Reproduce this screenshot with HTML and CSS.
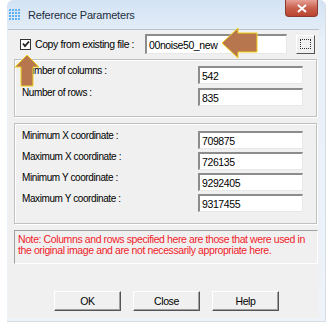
FILE: index.html
```html
<!DOCTYPE html>
<html lang="en">
<head>
  <meta charset="UTF-8">
  <title>Reference Parameters</title>
  <link rel="stylesheet" href="styles.css">
</head>
<body>

  <div class="window">
    <div class="titlebar">
      <svg class="app-icon" width="12" height="12" viewBox="0 0 12 12">
        <g fill="#5fb0f0">
          <rect x="0" y="0" width="2" height="2"/><rect x="3" y="0" width="2" height="2"/><rect x="6" y="0" width="2" height="2"/><rect x="9" y="0" width="2" height="2"/>
          <rect x="0" y="3" width="2" height="2"/><rect x="3" y="3" width="2" height="2"/><rect x="6" y="3" width="2" height="2"/><rect x="9" y="3" width="2" height="2"/>
          <rect x="0" y="6" width="2" height="2"/><rect x="3" y="6" width="2" height="2"/><rect x="6" y="6" width="2" height="2"/><rect x="9" y="6" width="2" height="2"/>
          <rect x="0" y="9" width="2" height="2"/><rect x="3" y="9" width="2" height="2"/><rect x="6" y="9" width="2" height="2"/><rect x="9" y="9" width="2" height="2"/>
        </g>
      </svg>
      <span class="title">Reference Parameters</span>
      <div class="close-btn">
        <svg width="10" height="9" viewBox="0 0 10 9">
          <path d="M1 1 L9 8 M9 1 L1 8" stroke="#fff" stroke-width="2"/>
        </svg>
      </div>
    </div>

    <div class="client">
      <div class="file-row">
        <span class="checkbox">
          <svg width="8" height="8" viewBox="0 0 8 8"><path d="M1 3.5 L3 6 L7 1.5" stroke="#222" stroke-width="1.8" fill="none"/></svg>
        </span>
        <span class="check-label">Copy from existing file :</span>
        <div class="field file-field">00noise50_new</div>
        <button class="browse"><span class="dots"></span></button>
      </div>

      <div class="group dims">
        <div class="row"><span class="label">Number of columns :</span><div class="field">542</div></div>
        <div class="row"><span class="label">Number of rows :</span><div class="field">835</div></div>
      </div>

      <div class="group coords">
        <div class="row"><span class="label">Minimum X coordinate :</span><div class="field">709875</div></div>
        <div class="row"><span class="label">Maximum X coordinate :</span><div class="field">726135</div></div>
        <div class="row"><span class="label">Minimum Y coordinate :</span><div class="field">9292405</div></div>
        <div class="row"><span class="label">Maximum Y coordinate :</span><div class="field">9317455</div></div>
      </div>

      <div class="note">
        Note: Columns and rows specified here are those that were used in<br>
        the original image and are not necessarily appropriate here.
      </div>

      <div class="buttons">
        <button class="btn">OK</button>
        <button class="btn">Close</button>
        <button class="btn">Help</button>
      </div>
    </div>

    <!-- callout arrows drawn over the dialog -->
    <svg class="arrow arrow-up" width="28" height="34" viewBox="0 0 28 34">
      <path d="M13 1 L25 13 L19 13 L19 32 L7 32 L7 13 L1 13 Z" fill="#b8764f" stroke="#f1d21c" stroke-width="1"/>
    </svg>
    <svg class="arrow arrow-left" width="38" height="32" viewBox="0 0 38 32">
      <path d="M1 16 L17 1 L17 6 L36 6 L36 25 L17 25 L17 31 Z" fill="#b8764f" stroke="#f1d21c" stroke-width="1"/>
    </svg>
  </div>

</body>
</html>
```

FILE: styles.css
```css
body {
  margin: 0;
  background: #fff;
  font-family: "Liberation Sans", sans-serif;
  font-size: 10px;
  letter-spacing: -0.4px;
  color: #000;
}
.window {
  position: relative;
  width: 319px;
  height: 322px;
  margin-left: 7px;
  background: linear-gradient(#d3e3f4, #e8f0f9 40px, #eef3f9);
  border-right: 1px solid #d8dde3;
  border-bottom: 1px solid #d8dde3;
  box-sizing: border-box;
  border-radius: 6px 6px 0 0;
}
.titlebar {
  height: 29px;
  display: flex;
  align-items: center;
  padding-left: 2px;
}
.app-icon {
  margin-right: 7px;
  margin-top: 1px;
}
.title {
  font-size: 11px;
  letter-spacing: -0.2px;
  color: #1e2e40;
  margin-top: 1px;
}
.close-btn {
  margin-left: auto;
  margin-right: 7px;
  align-self: flex-start;
  width: 33px;
  height: 17px;
  background: linear-gradient(#e6a195, #c9604e 50%, #b9442f);
  border: 1px solid #8a3a2e;
  border-top: none;
  border-radius: 0 0 4px 4px;
  box-sizing: border-box;
  display: flex;
  align-items: center;
  justify-content: center;
}
.client {
  margin-left: 1px;
  width: 311px;
  height: 289px;
  background: #f0f0f0;
  border-top: 1px solid #b4c2d2;
  box-sizing: border-box;
  padding: 4px 0 0 6px;
  display: flex;
  flex-direction: column;
}
.file-row {
  display: flex;
  align-items: center;
  height: 20px;
}
.checkbox {
  width: 11px;
  height: 11px;
  background: #fff;
  border: 1px solid #333;
  box-sizing: border-box;
  margin-left: 6px;
  margin-right: 4px;
  display: flex;
  align-items: center;
  justify-content: center;
}
.check-label {
  width: 110px;
  font-size: 10.5px;
}
.field {
  background: #fff;
  height: 18px;
  box-sizing: border-box;
  border-style: solid;
  border-width: 2px 1px 1px 2px;
  border-color: #8c8c8c #e8e8e8 #e8e8e8 #8c8c8c;
  padding: 2px 0 0 2px;
  font-size: 10.5px;
}
.file-field {
  width: 142px;
  height: 20px;
  padding-top: 3px;
}
.browse {
  width: 19px;
  height: 19px;
  margin-left: 9px;
  padding: 0;
  background: #f0f0f0;
  border: 1px solid;
  border-color: #fff #555 #555 #fff;
  display: flex;
  align-items: center;
  justify-content: center;
}
.dots {
  width: 11px;
  height: 10px;
  border: 1px dotted #333;
  box-sizing: border-box;
}
.group {
  width: 303px;
  border: 1px solid #c0c0c0;
  box-shadow: inset 1px 1px #fff, 1px 1px #fff;
  box-sizing: border-box;
  display: flex;
  flex-direction: column;
}
.dims {
  margin-top: 5px;
  height: 58px;
  padding-top: 6px;
  gap: 4px;
}
.coords {
  margin-top: 6px;
  height: 101px;
  padding-top: 7px;
  gap: 3px;
}
.row {
  display: flex;
  padding-left: 7px;
}
.label {
  flex: 1;
  margin-top: -1px;
}
.row .field {
  width: 105px;
  margin-right: 13px;
}
.note {
  margin-top: 6px;
  width: 304px;
  height: 34px;
  box-sizing: border-box;
  border: 1px solid;
  border-color: #a0a0a0 #fff #fff #a0a0a0;
  padding: 3px 0 0 3px;
  color: #f0222a;
  font-size: 10.5px;
  line-height: 11px;
}
.buttons {
  display: flex;
  gap: 12px;
  margin-top: 27px;
  padding-left: 40px;
}
.btn {
  width: 67px;
  height: 20px;
  padding: 0;
  background: #f0f0f0;
  border: 1px solid;
  border-color: #fff #555 #555 #fff;
  box-shadow: inset -1px -1px #a0a0a0;
  font-family: "Liberation Sans", sans-serif;
  font-size: 10.5px;
  letter-spacing: -0.4px;
  color: #000;
}
.arrow {
  position: absolute;
}
.arrow-up {
  left: 7px;
  top: 54px;
}
.arrow-left {
  left: 214px;
  top: 27px;
}
```
